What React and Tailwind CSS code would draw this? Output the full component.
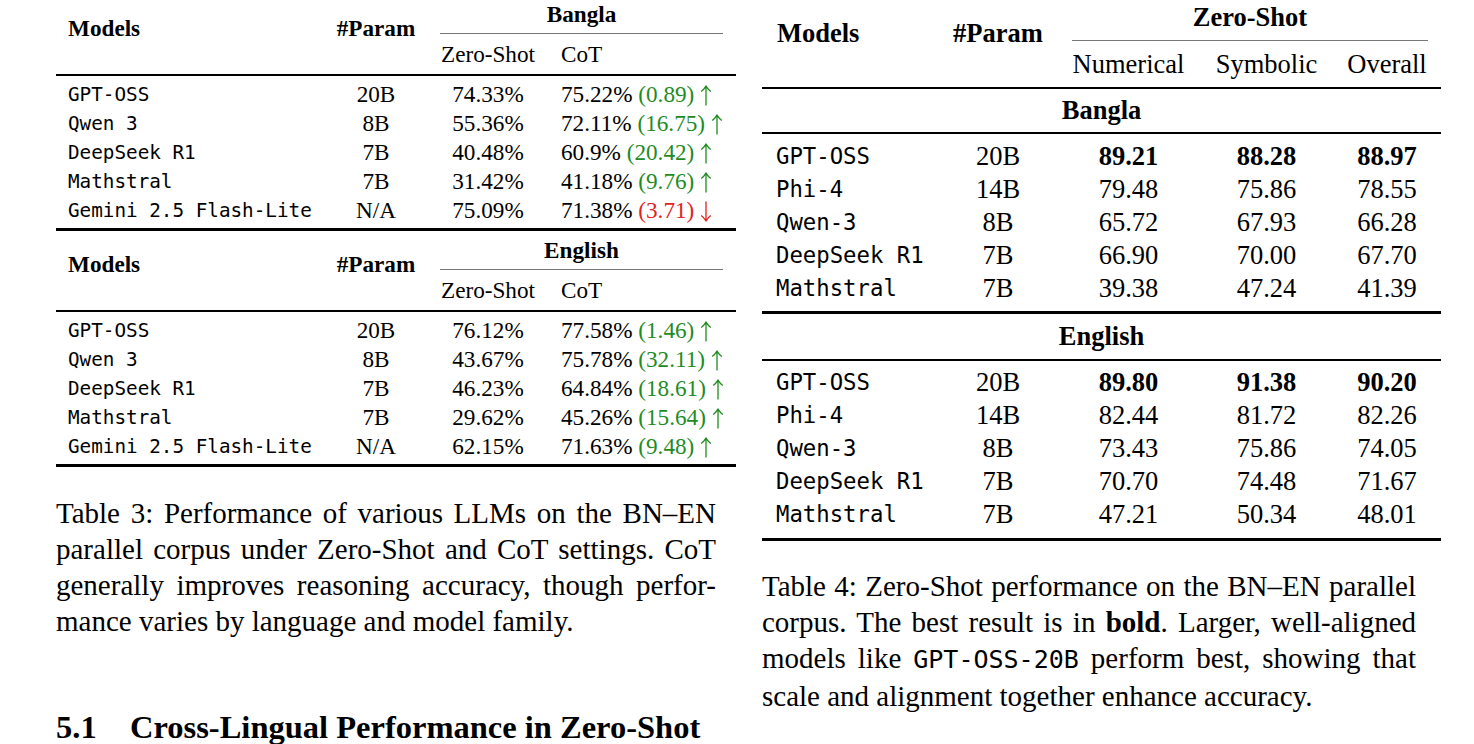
import React from 'react'

const serif = "font-['Liberation_Serif','Times_New_Roman',serif]"
const mono = "font-['DejaVu_Sans_Mono','Liberation_Mono',monospace]"

const banglaCot = [
  ['GPT-OSS', '20B', '74.33%', '75.22%', '(0.89)', true],
  ['Qwen 3', '8B', '55.36%', '72.11%', '(16.75)', true],
  ['DeepSeek R1', '7B', '40.48%', '60.9%', '(20.42)', true],
  ['Mathstral', '7B', '31.42%', '41.18%', '(9.76)', true],
  ['Gemini 2.5 Flash-Lite', 'N/A', '75.09%', '71.38%', '(3.71)', false],
]

const englishCot = [
  ['GPT-OSS', '20B', '76.12%', '77.58%', '(1.46)', true],
  ['Qwen 3', '8B', '43.67%', '75.78%', '(32.11)', true],
  ['DeepSeek R1', '7B', '46.23%', '64.84%', '(18.61)', true],
  ['Mathstral', '7B', '29.62%', '45.26%', '(15.64)', true],
  ['Gemini 2.5 Flash-Lite', 'N/A', '62.15%', '71.63%', '(9.48)', true],
]

const banglaZs = [
  ['GPT-OSS', '20B', '89.21', '88.28', '88.97'],
  ['Phi-4', '14B', '79.48', '75.86', '78.55'],
  ['Qwen-3', '8B', '65.72', '67.93', '66.28'],
  ['DeepSeek R1', '7B', '66.90', '70.00', '67.70'],
  ['Mathstral', '7B', '39.38', '47.24', '41.39'],
]

const englishZs = [
  ['GPT-OSS', '20B', '89.80', '91.38', '90.20'],
  ['Phi-4', '14B', '82.44', '81.72', '82.26'],
  ['Qwen-3', '8B', '73.43', '75.86', '74.05'],
  ['DeepSeek R1', '7B', '70.70', '74.48', '71.67'],
  ['Mathstral', '7B', '47.21', '50.34', '48.01'],
]

// thin LaTeX-style arrow
function Arrow({ up }) {
  return (
    <svg width="12" height="21" viewBox="0 0 12 21" className="inline-block align-[-4px]">
      {up ? (
        <path d="M6 20.5V1.5 M1.2 6.5 Q4 4.5 6 1.2 Q8 4.5 10.8 6.5" stroke="currentColor" strokeWidth="1.3" fill="none" />
      ) : (
        <path d="M6 0.5V19.5 M1.2 14.5 Q4 16.5 6 19.8 Q8 16.5 10.8 14.5" stroke="currentColor" strokeWidth="1.3" fill="none" />
      )}
    </svg>
  )
}

// small table of Table 3 (one per language)
function CotTable({ lang, rows, top }) {
  return (
    <div>
      {/* header */}
      <div className={`grid grid-cols-[268px_104px_120px_188px] text-[23.2px] ${top ? '' : 'pt-[5px]'}`}>
        <div className="row-span-2 pl-[12px] pt-[14px] leading-[28px] font-bold">Models</div>
        <div className="row-span-2 pt-[14px] leading-[28px] font-bold text-center">#Param</div>
        <div className="col-span-2 ml-[12px] mr-[13px] h-[34px] border-b border-[#777] text-center leading-[28px] font-bold">
          {lang}
        </div>
        <div className="h-[40px] leading-[40px] text-center">Zero-Shot</div>
        <div className="h-[40px] leading-[40px] pl-[13px]">CoT</div>
      </div>
      <div className="h-[2px] bg-black" />

      {/* rows */}
      <div className="pt-[4px] pb-[3px]">
        {rows.map((r) => (
          <div key={r[0]} className="grid grid-cols-[268px_104px_120px_188px] h-[29px] leading-[29px] text-[23.2px]">
            <div className={`${mono} pl-[12px] text-[19.3px] whitespace-pre`}>{r[0]}</div>
            <div className="text-center">{r[1]}</div>
            <div className="text-center">{r[2]}</div>
            <div className="pl-[13px] whitespace-nowrap">
              {r[3]}{' '}
              <span className={r[5] ? 'text-[#1f8c1f]' : 'text-[#e02222]'}>
                {r[4]} <Arrow up={r[5]} />
              </span>
            </div>
          </div>
        ))}
      </div>
      <div className="h-[3px] bg-black" />
    </div>
  )
}

// Table 4 rows block
function ZsRows({ rows }) {
  return rows.map((r, i) => (
    <div key={r[0]} className="grid grid-cols-[177px_118px_143px_133px_108px] h-[33px] leading-[33px]">
      <div className={`${mono} pl-[14px] text-[22.3px] whitespace-pre`}>{r[0]}</div>
      <div className="text-center">{r[1]}</div>
      <div className={`text-center ${i === 0 ? 'font-bold' : ''}`}>{r[2]}</div>
      <div className={`text-center ${i === 0 ? 'font-bold' : ''}`}>{r[3]}</div>
      <div className={`text-center ${i === 0 ? 'font-bold' : ''}`}>{r[4]}</div>
    </div>
  ))
}

function Line({ children, last }) {
  return (
    <div className={last ? 'text-left' : 'text-justify [text-align-last:justify]'}>{children}</div>
  )
}

export default function App() {
  return (
    <div className={`${serif} w-[1474px] h-[744px] overflow-hidden bg-white text-black flex gap-[26px] pl-[56px]`}>
      {/* left column */}
      <div className="w-[680px] shrink-0">
        <CotTable lang="Bangla" rows={banglaCot} top />
        <CotTable lang="English" rows={englishCot} />

        <div className="mt-[28px] w-[660px] text-[29px] leading-[36px]">
          <Line>Table 3: Performance of various LLMs on the BN–EN</Line>
          <Line>parallel corpus under Zero-Shot and CoT settings. CoT</Line>
          <Line>generally improves reasoning accuracy, though perfor-</Line>
          <Line last>mance varies by language and model family.</Line>
        </div>

        <div className="mt-[68px] flex text-[32.5px] leading-[40px] font-bold whitespace-nowrap">
          <span className="w-[74px]">5.1</span>
          <span>Cross-Lingual Performance in Zero-Shot</span>
        </div>
      </div>

      {/* right column */}
      <div className="w-[679px] shrink-0 text-[26.5px]">
        <div className="grid grid-cols-[177px_118px_143px_133px_108px]">
          <div className="row-span-2 pl-[15px] pt-[16px] leading-[34px] font-bold">Models</div>
          <div className="row-span-2 pt-[16px] leading-[34px] font-bold text-center">#Param</div>
          <div className="col-span-3 ml-[15px] mr-[13px] h-[41px] border-b border-[#777] text-center leading-[34px] font-bold">
            Zero-Shot
          </div>
          <div className="h-[46px] leading-[46px] text-center">Numerical</div>
          <div className="h-[46px] leading-[46px] text-center">Symbolic</div>
          <div className="h-[46px] leading-[46px] text-center">Overall</div>
        </div>
        <div className="h-[2px] bg-black" />

        <div className="h-[43px] leading-[43px] text-center font-bold">Bangla</div>
        <div className="h-[2px] bg-black" />
        <div className="pt-[6px] pb-[6px]">
          <ZsRows rows={banglaZs} />
        </div>
        <div className="h-[3px] bg-black" />

        <div className="h-[45px] leading-[45px] text-center font-bold">English</div>
        <div className="h-[2px] bg-black" />
        <div className="pt-[5px] pb-[7px]">
          <ZsRows rows={englishZs} />
        </div>
        <div className="h-[3px] bg-black" />

        <div className="mt-[27px] w-[654px] text-[29px] leading-[36px]">
          <Line>Table 4: Zero-Shot performance on the BN–EN parallel</Line>
          <Line>
            corpus. The best result is in <span className="font-bold">bold</span>. Larger, well-aligned
          </Line>
          <Line>
            models like <span className={`${mono} text-[25px]`}>GPT-OSS-20B</span> perform best, showing that
          </Line>
          <Line last>scale and alignment together enhance accuracy.</Line>
        </div>
      </div>
    </div>
  )
}
